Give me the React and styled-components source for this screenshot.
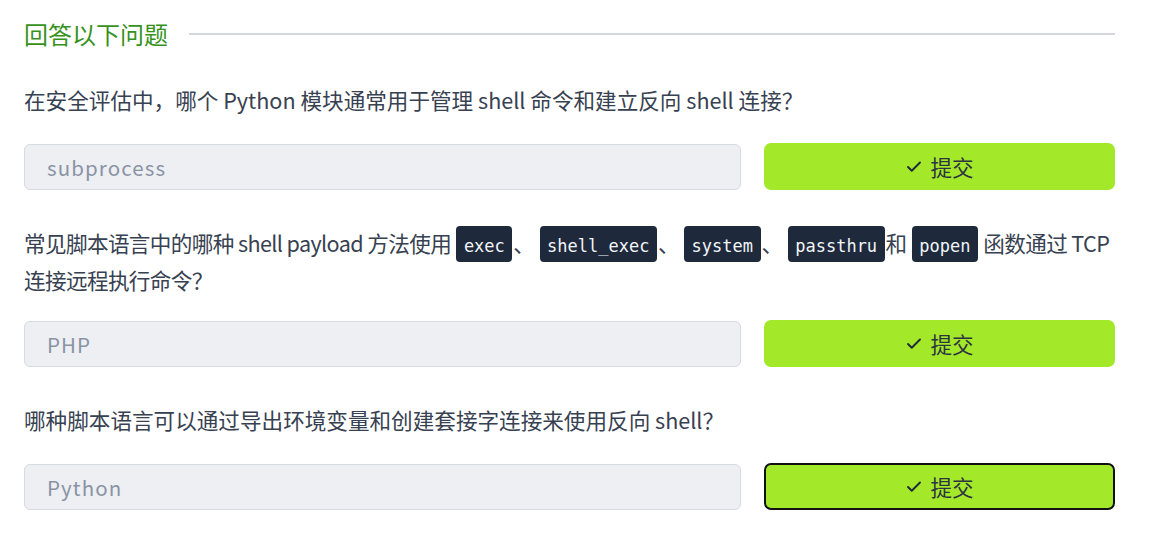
import React from "react";
import styled, { createGlobalStyle } from "styled-components";
import { Check } from "lucide-react";

const GlobalStyles = createGlobalStyle`
  html, body {
    margin: 0;
    padding: 0;
    background: #ffffff;
  }
  body {
    font-family: "Noto Sans CJK SC", "Noto Sans", sans-serif;
    color: #374151;
  }
`;

const Page = styled.main`
  padding: 13px 38px 0 24px;
`;

const HeadingRow = styled.div`
  display: flex;
  align-items: center;
  gap: 21px;
`;

const Heading = styled.h2`
  margin: 0;
  font-size: 24px;
  font-weight: 400;
  line-height: 42px;
  color: #37921c;
  white-space: nowrap;
`;

const Rule = styled.div`
  flex: 1;
  height: 2px;
  background: #d4d7de;
`;

const Block = styled.section`
  margin-top: ${(p) => (p.$first ? "26px" : "34px")};
`;

const Question = styled.p`
  margin: 0;
  font-size: 21.6px;
  line-height: 37px;
  letter-spacing: ${(p) => (p.$tight ? "-0.62px" : "normal")};
  color: #374151;
`;

const Code = styled.code`
  font-family: "DejaVu Sans Mono", "Liberation Mono", monospace;
  font-size: 17px;
  font-weight: 400;
  letter-spacing: 0;
  line-height: 1;
  color: #f1f5f9;
  background: #1e293b;
  border-radius: 4px;
  padding: 10px 7.5px 6px;
  margin: 0 1px;
`;

const AnswerRow = styled.div`
  display: grid;
  grid-template-columns: 1fr 351px;
  gap: 23px;
  margin-top: ${(p) => p.$gap || "26px"};
`;

const Answer = styled.div`
  height: 46px;
  box-sizing: border-box;
  display: flex;
  align-items: center;
  padding: 0 22px;
  background: #edeff3;
  border: 1px solid #d6dae1;
  border-radius: 6px;
  font-size: 20.5px;
  letter-spacing: 1.1px;
  color: #8a93a4;
`;

const SubmitButton = styled.button`
  height: 47px;
  margin-top: -1px;
  box-sizing: border-box;
  display: flex;
  align-items: center;
  justify-content: center;
  gap: 7px;
  background: #a3e92a;
  border: 2px solid ${(p) => (p.$focused ? "#111111" : "#a3e92a")};
  border-radius: 7px;
  font-family: "Noto Sans CJK SC", "Noto Sans", sans-serif;
  font-size: 21.6px;
  color: #2d3340;
  cursor: pointer;
`;

const questions = [
  {
    text: (
      <>在安全评估中，哪个 Python 模块通常用于管理 shell 命令和建立反向 shell 连接？</>
    ),
    answer: "subprocess",
  },
  {
    text: (
      <>
        常见脚本语言中的哪种 shell payload 方法使用 <Code>exec</Code>、 <Code>shell_exec</Code>、{" "}
        <Code>system</Code>、 <Code>passthru</Code>和 <Code>popen</Code> 函数通过 TCP 连接远程执行命令？
      </>
    ),
    answer: "PHP",
    gap: "23px",
    tight: true,
  },
  {
    text: <>哪种脚本语言可以通过导出环境变量和创建套接字连接来使用反向 shell？</>,
    answer: "Python",
    focused: true,
  },
];

export default function App() {
  return (
    <Page>
      <GlobalStyles />
      <HeadingRow>
        <Heading>回答以下问题</Heading>
        <Rule />
      </HeadingRow>
      {questions.map((q, i) => (
        <Block key={i} $first={i === 0}>
          <Question $tight={q.tight}>{q.text}</Question>
          <AnswerRow $gap={q.gap}>
            <Answer>{q.answer}</Answer>
            <SubmitButton $focused={q.focused}>
              <Check size={18} strokeWidth={2.5} color="#1f2937" />
              提交
            </SubmitButton>
          </AnswerRow>
        </Block>
      ))}
    </Page>
  );
}
